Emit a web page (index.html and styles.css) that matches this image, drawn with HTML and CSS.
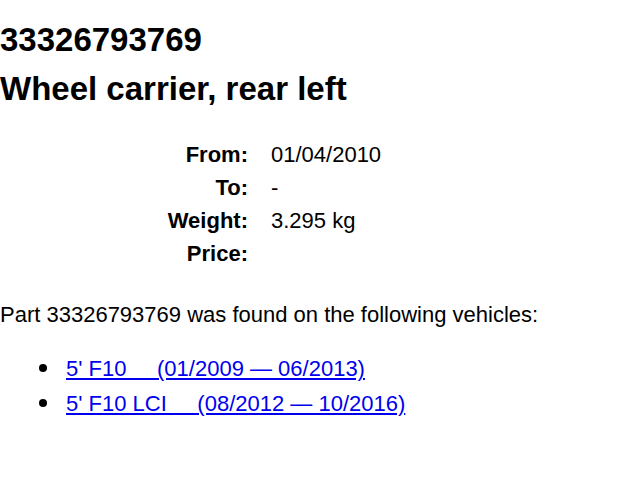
FILE: index.html
```html
<!DOCTYPE html>
<html lang="en">
    <head>
        <meta charset="UTF-8">
        <meta name="viewport" content="width=device-width, initial-scale=1.0">
        <title>33326793769 - Wheel carrier, rear left</title>
        <link rel="stylesheet" href="styles.css">
    </head>
    <body>
        <h1 class="part-number">33326793769</h1>
        <h2 class="part-name">Wheel carrier, rear left</h2>

        <!-- Part details -->
        <table class="part-details">
            <tr>
                <th>From:</th>
                <td>01/04/2010</td>
            </tr>
            <tr>
                <th>To:</th>
                <td>-</td>
            </tr>
            <tr>
                <th>Weight:</th>
                <td>3.295 kg</td>
            </tr>
            <tr>
                <th>Price:</th>
                <td></td>
            </tr>
        </table>

        <p class="found-on">Part 33326793769 was found on the following vehicles:</p>
        <ul class="vehicles">
            <li><a href="#">5' F10&nbsp;&nbsp;&nbsp;&nbsp;&nbsp;(01/2009 &mdash; 06/2013)</a></li>
            <li><a href="#">5' F10 LCI&nbsp;&nbsp;&nbsp;&nbsp;&nbsp;(08/2012 &mdash; 10/2016)</a></li>
        </ul>
    </body>
</html>
```

FILE: styles.css
```css
body {
    font-family: "Liberation Sans", Arial, Helvetica, sans-serif;
    font-size: 22px;
    line-height: 25px;
    margin: 0;
    color: #000;
    background-color: #fff;
}
.part-number, .part-name {
    font-size: 33px;
    line-height: 38px;
    font-weight: bold;
}
.part-number {
    margin: 21px 0 11px 0;
}
.part-name {
    margin: 0;
}
.part-details {
    margin: 29px 0 0 150px;
    border-spacing: 2px;
}
.part-details th {
    width: 96px;
    text-align: right;
    padding: 3px 12px 3px 0;
}
.part-details td {
    text-align: left;
    padding: 3px 0 3px 9px;
}
.found-on {
    margin: 31px 0 0 0;
}
.vehicles {
    list-style: none;
    margin: 29px 0 0 0;
    padding-left: 66px;
}
.vehicles li {
    margin-bottom: 10px;
}
.vehicles li::before {
    content: "";
    display: inline-block;
    width: 8px;
    height: 8px;
    border-radius: 50%;
    background-color: #000;
    margin-left: -27px;
    margin-right: 19px;
    vertical-align: 4px;
}
.vehicles a {
    color: #0000ee;
}
```
